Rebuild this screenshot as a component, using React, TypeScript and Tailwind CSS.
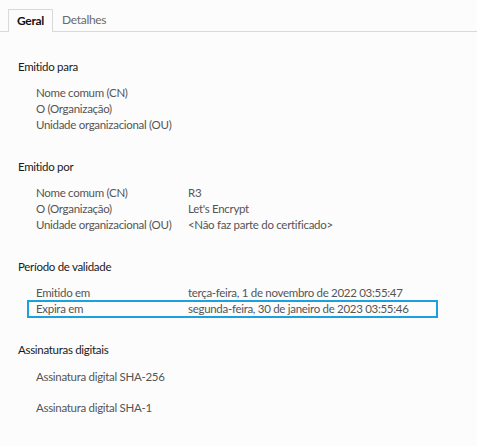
const font = { fontFamily: 'Lato, "Noto Sans", sans-serif' };

type Row = { label: string; value?: string; highlight?: boolean };

const emitidoPara: Row[] = [
  { label: "Nome comum (CN)" },
  { label: "O (Organização)" },
  { label: "Unidade organizacional (OU)" },
];

const emitidoPor: Row[] = [
  { label: "Nome comum (CN)", value: "R3" },
  { label: "O (Organização)", value: "Let's Encrypt" },
  { label: "Unidade organizacional (OU)", value: "<Não faz parte do certificado>" },
];

const validade: Row[] = [
  { label: "Emitido em", value: "terça-feira, 1 de novembro de 2022 03:55:47" },
  { label: "Expira em", value: "segunda-feira, 30 de janeiro de 2023 03:55:46", highlight: true },
];

function InfoRow({ row }: { row: Row }) {
  return (
    <div className="relative flex h-[16px] items-center leading-4 text-[#555555]">
      {row.highlight && (
        <div className="pointer-events-none absolute -top-[1px] -left-[9px] h-[18px] w-[411px] border-2 border-[#1ba1e2]" />
      )}
      <span className="w-[152px] shrink-0 whitespace-nowrap">{row.label}</span>
      {row.value && <span className="whitespace-nowrap">{row.value}</span>}
    </div>
  );
}

function Section({ title, rows, className }: { title: string; rows: Row[]; className: string }) {
  return (
    <section className={className}>
      <h3 className="h-[16px] leading-4 text-[#1a1a1a]">{title}</h3>
      <div className="mt-[10px] pl-[18px]">
        {rows.map((row) => (
          <InfoRow key={row.label} row={row} />
        ))}
      </div>
    </section>
  );
}

export default function App() {
  return (
    <div
      className="h-[446px] w-[477px] overflow-hidden bg-[#fcfcfc] text-[11.5px] tracking-[-0.3px]"
      style={font}
    >
      <div className="flex h-[32px] items-end border-b border-[#d9d9d9] pl-[8px]">
        <div className="-mb-px flex h-[23px] w-[45px] items-center justify-center border border-b-0 border-[#d9d9d9] bg-[#fcfcfc] text-[12px] font-bold text-[#111111]">
          Geral
        </div>
        <div className="flex h-[22px] items-center pl-[9px] text-[12px] text-[#6a6a6a]">Detalhes</div>
      </div>

      <div className="pl-[18px]">
        <Section title="Emitido para" rows={emitidoPara} className="pt-[27px]" />
        <Section title="Emitido por" rows={emitidoPor} className="pt-[26px]" />
        <Section title="Período de validade" rows={validade} className="pt-[26px]" />

        <section className="pt-[25px]">
          <h3 className="h-[16px] leading-4 text-[#1a1a1a]">Assinaturas digitais</h3>
          <div className="mt-[11px] pl-[18px] leading-4 text-[#555555]">
            <p className="h-[16px]">Assinatura digital SHA-256</p>
            <p className="mt-[15px] h-[16px]">Assinatura digital SHA-1</p>
          </div>
        </section>
      </div>
    </div>
  );
}
